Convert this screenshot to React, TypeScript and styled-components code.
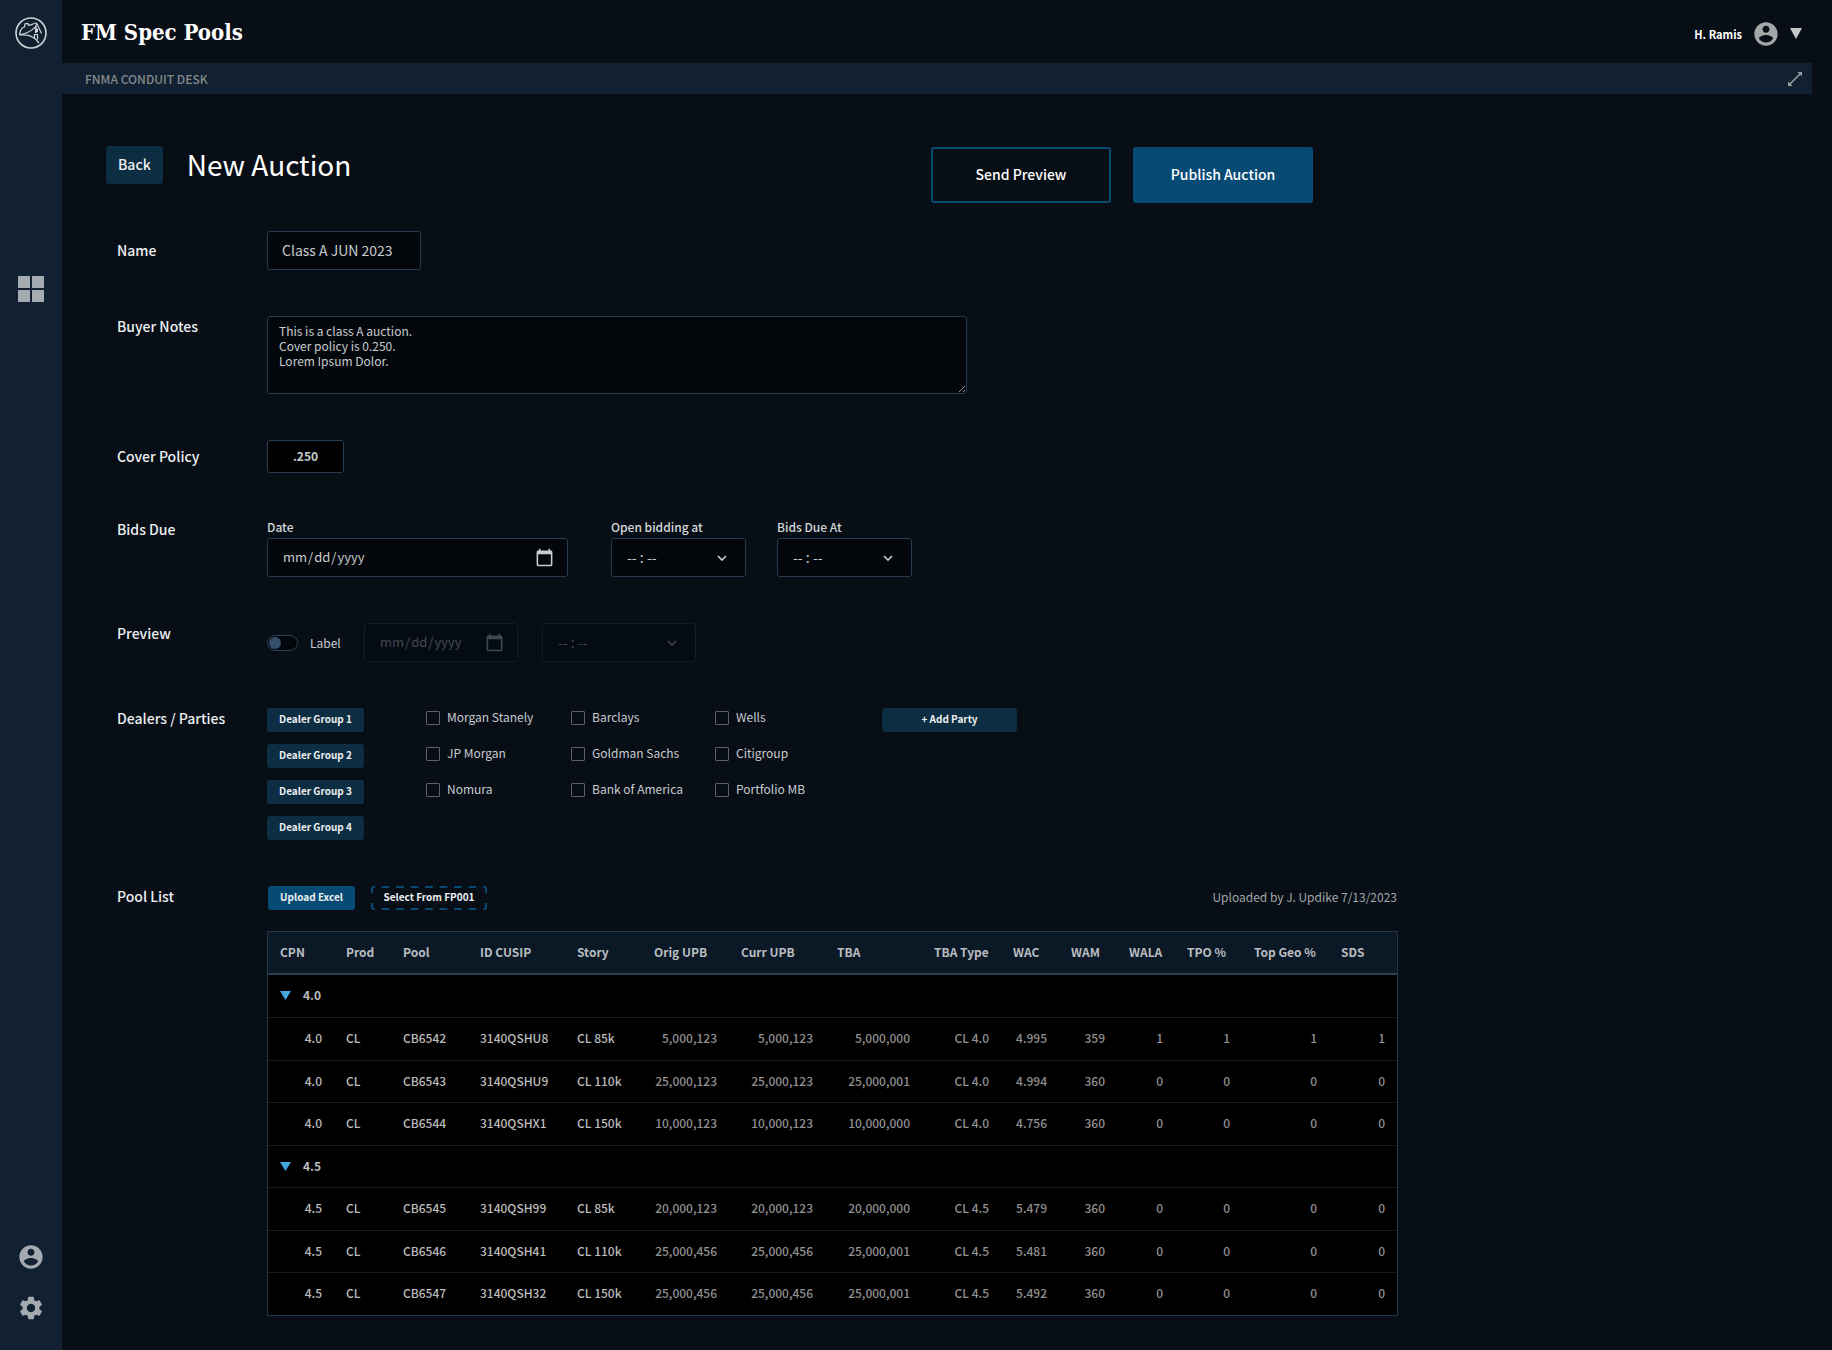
import React, { useState } from "react";
import styled, { createGlobalStyle } from "styled-components";

const color = {
  page: "#070e16",
  rail: "#122131",
  field: "#03070b",
  line: "#283c51",
  petrol: "#0c2d42",
  blue: "#074b75",
  text: "#eceff1",
  soft: "#c8ccce",
  muted: "#a3a6a8",
  icon: "#a3abb1",
};

const GlobalStyle = createGlobalStyle`
  *, *::before, *::after { box-sizing: border-box; }
  body {
    margin: 0;
    background: ${color.page};
    color: ${color.text};
    color-scheme: dark;
    font-family: "Noto Sans CJK SC", "Noto Sans", sans-serif;
    font-size: 14px;
    line-height: 20px;
  }
  button, input, select, textarea { font: inherit; color: inherit; margin: 0; }
  button { cursor: pointer; }
`;

const Shell = styled.div`
  display: flex;
  min-height: 100vh;
`;

const Rail = styled.nav`
  flex: none;
  width: 62px;
  display: flex;
  flex-direction: column;
  align-items: center;
  padding: 17px 0 29px;
  background: ${color.rail};
`;

const RailLink = styled.a`
  display: flex;
  color: ${color.icon};
`;

const RailMain = styled.div`
  margin-top: 227px;
`;

const RailFoot = styled.div`
  margin-top: auto;
  display: flex;
  flex-direction: column;
  gap: 23px;
`;

const Page = styled.div`
  flex: 1;
  min-width: 0;
`;

const TopBar = styled.header`
  height: 63px;
  display: flex;
  align-items: center;
  justify-content: space-between;
  padding: 0 30px 0 19px;
`;

const Brand = styled.div`
  font-family: "Roboto Slab", "DejaVu Serif Condensed", "DejaVu Serif", serif;
  font-size: 22px;
  line-height: 30px;
  font-weight: 700;
  color: #fff;
`;

const UserMenu = styled.button`
  display: flex;
  align-items: center;
  gap: 10px;
  padding: 4px 0 0;
  border: 0;
  background: none;
  font-size: 11px;
  font-weight: 700;
  color: #fff;
`;

const UserIcons = styled.span`
  display: flex;
  align-items: center;
  gap: 10px;
  color: #a4a6a8;
`;

const DeskBar = styled.div`
  display: flex;
  align-items: center;
  justify-content: space-between;
  height: 31px;
  margin-right: 20px;
  padding: 0 9px 0 23px;
  background: ${color.rail};
  color: #85898c;
  font-size: 12px;
  font-weight: 500;
`;

const IconButton = styled.button`
  display: flex;
  padding: 0;
  border: 0;
  background: none;
  color: #9a9ea1;
`;

const Content = styled.main`
  padding: 52px 44px 35px;
  max-width: 1424px;
`;

const TitleRow = styled.div`
  display: flex;
  align-items: flex-start;
  justify-content: space-between;
  max-width: 1207px;
  margin-bottom: 28px;
`;

const TitleGroup = styled.div`
  display: flex;
  align-items: center;
  gap: 24px;
`;

const Title = styled.h1`
  margin: 0;
  padding-bottom: 2px;
  font-size: 28px;
  line-height: 36px;
  font-weight: 400;
  color: #fff;
`;

const Actions = styled.div`
  display: flex;
  gap: 22px;
  padding-top: 1px;
`;

const BackButton = styled.button`
  height: 38px;
  padding: 0 12px 2px;
  border: 0;
  border-radius: 3px;
  background: ${color.petrol};
  font-weight: 500;
`;

const ActionButton = styled.button<{ $filled?: boolean }>`
  width: 180px;
  height: 56px;
  padding: 0 0 2px;
  border: 2px solid ${color.blue};
  border-radius: 3px;
  background: ${(p) => (p.$filled ? color.blue : "transparent")};
  font-weight: 500;
  color: #fff;
`;

const Form = styled.div`
  display: flex;
  flex-direction: column;
  gap: 46px;
  padding-left: 11px;
`;

const FormRow = styled.div<{ $center?: boolean }>`
  display: grid;
  grid-template-columns: 150px minmax(0, 1fr);
  align-items: ${(p) => (p.$center ? "center" : "start")};
`;

const RowLabel = styled.label`
  padding-bottom: 2px;
  font-weight: 500;
`;

const NameInput = styled.input`
  width: 154px;
  height: 39px;
  padding: 0 14px 2px;
  border: 1px solid ${color.line};
  border-radius: 3px;
  background: ${color.field};
  color: ${color.soft};
`;

const Notes = styled.textarea`
  display: block;
  width: 100%;
  max-width: 700px;
  height: 78px;
  padding: 6px 11px;
  border: 1px solid ${color.line};
  border-radius: 3px;
  background: ${color.field};
  color: ${color.soft};
  font-size: 12px;
  line-height: 15px;
`;

const CoverInput = styled.input`
  width: 77px;
  height: 33px;
  padding: 0 0 2px;
  border: 1px solid ${color.line};
  border-radius: 3px;
  background: #000;
  color: ${color.soft};
  font-size: 12px;
  font-weight: 700;
  text-align: center;
`;

const Inline = styled.div`
  display: flex;
  align-items: flex-end;
`;

const Field = styled.div<{ $after?: number }>`
  display: flex;
  flex-direction: column;
  margin-right: ${(p) => p.$after ?? 0}px;
`;

const FieldLabel = styled.label`
  height: 19px;
  line-height: 15px;
  font-size: 12px;
  font-weight: 500;
  color: #d5d8da;
`;

const ControlBox = styled.div<{ $width: number; $inset: number; $disabled?: boolean }>`
  display: grid;
  align-items: center;
  width: ${(p) => p.$width}px;
  opacity: ${(p) => (p.$disabled ? 0.3 : 1)};
  color: ${color.soft};
  > * { grid-area: 1 / 1; }
  > svg { justify-self: end; margin-right: ${(p) => p.$inset}px; pointer-events: none; }
`;

const DateInput = styled.input`
  width: 100%;
  height: 39px;
  padding: 0 14px 2px;
  border: 1px solid ${color.line};
  border-radius: 3px;
  background: ${color.field};
  font-size: 13px;
  &::-webkit-calendar-picker-indicator { opacity: 0; }
  &:disabled { color: inherit; }
`;

const TimeSelect = styled.select`
  appearance: none;
  width: 100%;
  height: 39px;
  padding: 0 15px 2px;
  border: 1px solid ${color.line};
  border-radius: 3px;
  background: ${color.field};
  &:disabled { opacity: 1; color: inherit; }
`;

const PreviewRow = styled.div`
  display: flex;
  align-items: center;
  gap: 24px;
`;

const SwitchLabel = styled.label`
  display: flex;
  align-items: center;
  gap: 12px;
  width: 73px;
  font-size: 12px;
  line-height: 18px;
  color: ${color.soft};
`;

const Switch = styled.input`
  appearance: none;
  flex: none;
  display: flex;
  align-items: center;
  width: 31px;
  height: 16px;
  padding: 0 1px;
  border: 1px solid #2c4157;
  border-radius: 8px;
  background: ${color.field};
  &::before {
    content: "";
    width: 12px;
    height: 12px;
    border-radius: 6px;
    background: #35506c;
  }
  &:checked { justify-content: flex-end; }
  &:checked::before { background: #4aa3df; }
`;

const Parties = styled.div`
  display: flex;
  align-items: flex-start;
`;

const GroupList = styled.div`
  display: flex;
  flex-direction: column;
  gap: 12px;
  width: 97px;
  margin-right: 62px;
`;

const SmallButton = styled.button<{ $filled?: boolean; $width?: number }>`
  height: 24px;
  width: ${(p) => (p.$width ? `${p.$width}px` : "auto")};
  padding: 0 0 2px;
  border: 0;
  border-radius: 3px;
  background: ${(p) => (p.$filled ? color.blue : color.petrol)};
  font-size: 10px;
  line-height: 16px;
  font-weight: 700;
`;

const dashX = `linear-gradient(90deg, ${color.blue} 4px, transparent 4px 11px, ${color.blue} 11px)`;
const dashY = `linear-gradient(${color.blue} 7px, transparent 7px 17px, ${color.blue} 17px)`;

const DashedButton = styled(SmallButton)`
  background:
    ${dashX} top left / 15px 2px round no-repeat,
    ${dashX} bottom left / 15px 2px round no-repeat,
    ${dashY} top left / 2px 24px no-repeat,
    ${dashY} top right / 2px 24px no-repeat;
`;

const CheckGrid = styled.div`
  display: grid;
  grid-template-columns: 145px 144px 167px;
  row-gap: 17px;
`;

const CheckLabel = styled.label`
  display: flex;
  align-items: center;
  gap: 7px;
  font-size: 12px;
  line-height: 19px;
  color: ${color.soft};
`;

const CheckText = styled.span`
  padding-bottom: 1px;
  line-height: 18px;
`;

const Check = styled.input`
  appearance: none;
  flex: none;
  width: 14px;
  height: 14px;
  border: 1px solid #5d6164;
  border-radius: 1px;
  background: transparent;
  &:checked { background: #4aa3df; }
`;

const PoolArea = styled.div`
  display: flex;
  flex-direction: column;
  gap: 21px;
  width: 1131px;
`;

const PoolTools = styled.div`
  display: flex;
  align-items: center;
  gap: 16px;
  padding-left: 1px;
`;

const Uploaded = styled.span`
  margin-left: auto;
  padding: 0 1px 2px 0;
  font-size: 12px;
  color: ${color.muted};
`;

const Table = styled.table`
  width: 100%;
  table-layout: fixed;
  border-collapse: separate;
  border-spacing: 0;
  border: 1px solid #22364c;
  background: #000;
  font-size: 12px;
  font-weight: 500;
  color: ${color.soft};
`;

const Head = styled.th`
  height: 43px;
  padding: 0 12px 2px;
  border-bottom: 2px solid #2b3c53;
  background: #0b1825;
  text-align: left;
  font-weight: 700;
  white-space: nowrap;
  color: #b9bdc0;
`;

const Row = styled.tr`
  height: 42px;
  &:nth-child(even) { height: 43px; }
`;

const Cell = styled.td<{ $right?: boolean; $dim?: boolean }>`
  padding: 0 12px 2px;
  border-top: 1px solid #191919;
  text-align: ${(p) => (p.$right ? "right" : "left")};
  white-space: nowrap;
  color: ${(p) => (p.$dim ? "#929292" : "#bcbcbc")};
`;

const GroupCell = styled.td<{ $first?: boolean }>`
  padding: 0 12px 2px;
  border-top: ${(p) => (p.$first ? "0" : "1px solid #191919")};
`;

const GroupToggle = styled.button`
  display: flex;
  align-items: center;
  gap: 12px;
  padding: 0;
  border: 0;
  background: none;
  font-weight: 700;
  color: #b9bdc0;
`;

const LogoIcon = () => (
  <svg width="32" height="32" viewBox="0 0 32 32" fill="none" stroke="#d0d5d8">
    <circle cx="16" cy="16" r="15" strokeWidth="1.6" />
    <path
      d="M4.500 17.500C5 14.500 6 11.800 8 10.500l1.500-.5.5-3.200 3-.5.5 2.200C16 8 19 6.200 21.500 6c.8 3-4 7-9 9.500-3 1.400-5.500 2-8 2zM4.500 18c7-.8 12 .5 16 4l3.500 4M21.500 6l5 10.500M21 9l-.5 7M19 17.500h3.500v5M19.500 17.500v3"
      strokeWidth="1.200"
      strokeLinejoin="round"
    />
    <path d="M20 11.500h3v3.500l-3 1z" fill="#d0d5d8" stroke="none" />
  </svg>
);

const GridIcon = () => (
  <svg width="26" height="26" viewBox="0 0 26 26" fill="currentColor">
    <path d="M0 0h12v12H0zM14 0h12v12H14zM0 14h12v12H0zM14 14h12v12H14z" />
  </svg>
);

const AccountIcon = () => (
  <svg width="28" height="28" viewBox="0 0 24 24" fill="currentColor">
    <path d="M12 2C6.480 2 2 6.480 2 12s4.480 10 10 10 10-4.480 10-10S17.520 2 12 2zm0 3c1.660 0 3 1.340 3 3s-1.340 3-3 3-3-1.340-3-3 1.340-3 3-3zm0 14.200c-2.500 0-4.710-1.280-6-3.220.03-1.990 4-3.080 6-3.080 1.990 0 5.970 1.090 6 3.080-1.290 1.940-3.500 3.220-6 3.220z" />
  </svg>
);

const GearIcon = () => (
  <svg width="28" height="28" viewBox="0 0 24 24" fill="currentColor">
    <path d="M19.140 12.940c.04-.3.06-.61.06-.94 0-.32-.02-.64-.07-.94l2.030-1.580c.18-.14.23-.41.12-.61l-1.920-3.320c-.12-.22-.37-.29-.59-.22l-2.390.96c-.5-.38-1.030-.7-1.620-.94l-.36-2.540c-.04-.24-.24-.41-.48-.41h-3.840c-.24 0-.43.17-.47.41l-.36 2.540c-.59.24-1.130.57-1.620.94l-2.390-.96c-.22-.08-.47 0-.59.22L2.740 8.870c-.12.21-.08.47.12.61l2.030 1.580c-.05.3-.09.63-.09.94s.02.64.07.94l-2.030 1.580c-.18.14-.23.41-.12.61l1.920 3.320c.12.22.37.29.59.22l2.390-.96c.5.38 1.030.7 1.620.94l.36 2.540c.05.24.24.41.48.41h3.840c.24 0 .44-.17.47-.41l.36-2.540c.59-.24 1.130-.56 1.620-.94l2.390.96c.22.08.47 0 .59-.22l1.920-3.320c.12-.22.07-.47-.12-.61l-2.010-1.580zM12 15.600c-1.980 0-3.600-1.620-3.600-3.600s1.620-3.600 3.600-3.600 3.600 1.620 3.600 3.600-1.620 3.600-3.600 3.600z" />
  </svg>
);

const CaretIcon = () => (
  <svg width="12" height="11" viewBox="0 0 12 11" fill="#c6c8ca">
    <path d="M0 0h12L6 11z" />
  </svg>
);

const GroupCaret = ({ open }: { open: boolean }) => (
  <svg width="11" height="10" viewBox="0 0 11 10" fill="#45a5e0">
    <path d={open ? "M0 1h11L5.500 10z" : "M1 0v10l9-5z"} />
  </svg>
);

const ExpandIcon = () => (
  <svg width="16" height="16" viewBox="0 0 16 16" fill="currentColor">
    <path d="M10.500 1H15v4.500L13.300 3.800 3.800 13.300 5.500 15H1v-4.500l1.700 1.700 9.500-9.500z" />
  </svg>
);

const CalendarIcon = () => (
  <svg width="19" height="19" viewBox="0 0 24 24" fill="currentColor">
    <path d="M20 3h-1V1h-2v2H7V1H5v2H4c-1.100 0-2 .9-2 2v16c0 1.100.9 2 2 2h16c1.100 0 2-.9 2-2V5c0-1.100-.9-2-2-2zm0 18H4V8h16v13z" />
  </svg>
);

const Chevron = () => (
  <svg width="10" height="6" viewBox="0 0 10 6" fill="none" stroke="currentColor" strokeWidth="1.700">
    <path d="m1 1 4 4 4-4" />
  </svg>
);

const times = ["08:00", "09:00", "10:00", "11:00", "12:00", "13:00", "14:00", "15:00", "16:00"];

type PickerProps = { id: string; width: number; disabled?: boolean; label?: string };

const TimePicker = ({ id, width, disabled, label }: PickerProps) => (
  <ControlBox $width={width} $inset={19} $disabled={disabled}>
    <TimeSelect id={id} disabled={disabled} aria-label={label}>
      <option value="">-- : --</option>
      {times.map((t) => (
        <option key={t}>{t}</option>
      ))}
    </TimeSelect>
    <Chevron />
  </ControlBox>
);

const DatePicker = ({ id, width, disabled, label }: PickerProps) => (
  <ControlBox $width={width} $inset={14} $disabled={disabled}>
    <DateInput id={id} type="date" disabled={disabled} aria-label={label} />
    <CalendarIcon />
  </ControlBox>
);

const dealerGroups = ["Dealer Group 1", "Dealer Group 2", "Dealer Group 3", "Dealer Group 4"];

const dealers = [
  "Morgan Stanely", "Barclays", "Wells",
  "JP Morgan", "Goldman Sachs", "Citigroup",
  "Nomura", "Bank of America", "Portfolio MB",
];

const columns: [string, number][] = [
  ["CPN", 66], ["Prod", 57], ["Pool", 77], ["ID CUSIP", 97], ["Story", 77],
  ["Orig UPB", 87], ["Curr UPB", 96], ["TBA", 97], ["TBA Type", 79], ["WAC", 58],
  ["WAM", 58], ["WALA", 58], ["TPO %", 67], ["Top Geo %", 87], ["SDS", 68],
];

const pools = [
  {
    coupon: "4.0",
    rows: [
      ["4.0", "CL", "CB6542", "3140QSHU8", "CL 85k", "5,000,123", "5,000,123", "5,000,000", "CL 4.0", "4.995", "359", "1", "1", "1", "1"],
      ["4.0", "CL", "CB6543", "3140QSHU9", "CL 110k", "25,000,123", "25,000,123", "25,000,001", "CL 4.0", "4.994", "360", "0", "0", "0", "0"],
      ["4.0", "CL", "CB6544", "3140QSHX1", "CL 150k", "10,000,123", "10,000,123", "10,000,000", "CL 4.0", "4.756", "360", "0", "0", "0", "0"],
    ],
  },
  {
    coupon: "4.5",
    rows: [
      ["4.5", "CL", "CB6545", "3140QSH99", "CL 85k", "20,000,123", "20,000,123", "20,000,000", "CL 4.5", "5.479", "360", "0", "0", "0", "0"],
      ["4.5", "CL", "CB6546", "3140QSH41", "CL 110k", "25,000,456", "25,000,456", "25,000,001", "CL 4.5", "5.481", "360", "0", "0", "0", "0"],
      ["4.5", "CL", "CB6547", "3140QSH32", "CL 150k", "25,000,456", "25,000,456", "25,000,001", "CL 4.5", "5.492", "360", "0", "0", "0", "0"],
    ],
  },
];

const PoolTable = () => {
  const [closed, setClosed] = useState<string[]>([]);
  const toggle = (c: string) =>
    setClosed((list) => (list.includes(c) ? list.filter((x) => x !== c) : [...list, c]));
  return (
    <Table>
      <colgroup>
        {columns.map(([name, width]) => (
          <col key={name} width={width} />
        ))}
      </colgroup>
      <thead>
        <tr>
          {columns.map(([name]) => (
            <Head key={name} scope="col">{name}</Head>
          ))}
        </tr>
      </thead>
      {pools.map((group, g) => {
        const open = !closed.includes(group.coupon);
        return (
          <tbody key={group.coupon}>
            <Row>
              <GroupCell colSpan={columns.length} $first={g === 0}>
                <GroupToggle type="button" aria-expanded={open} onClick={() => toggle(group.coupon)}>
                  <GroupCaret open={open} />
                  {group.coupon}
                </GroupToggle>
              </GroupCell>
            </Row>
            {open &&
              group.rows.map((row) => (
                <Row key={row[2]}>
                  {row.map((value, i) => (
                    <Cell key={columns[i][0]} $right={i === 0 || i > 4} $dim={i > 4}>{value}</Cell>
                  ))}
                </Row>
              ))}
          </tbody>
        );
      })}
    </Table>
  );
};

export default function App() {
  const [preview, setPreview] = useState(false);
  return (
    <>
      <GlobalStyle />
      <Shell>
        <Rail aria-label="Main">
          <RailLink href="#home" aria-label="Home"><LogoIcon /></RailLink>
          <RailMain>
            <RailLink href="#dashboard" aria-label="Dashboard"><GridIcon /></RailLink>
          </RailMain>
          <RailFoot>
            <RailLink href="#account" aria-label="Account"><AccountIcon /></RailLink>
            <RailLink href="#settings" aria-label="Settings"><GearIcon /></RailLink>
          </RailFoot>
        </Rail>
        <Page>
          <TopBar>
            <Brand>FM Spec Pools</Brand>
            <UserMenu type="button">
              H. Ramis
              <UserIcons><AccountIcon /><CaretIcon /></UserIcons>
            </UserMenu>
          </TopBar>
          <DeskBar>
            FNMA CONDUIT DESK
            <IconButton type="button" aria-label="Expand"><ExpandIcon /></IconButton>
          </DeskBar>
          <Content>
            <TitleRow>
              <TitleGroup>
                <BackButton type="button">Back</BackButton>
                <Title>New Auction</Title>
              </TitleGroup>
              <Actions>
                <ActionButton type="button">Send Preview</ActionButton>
                <ActionButton type="button" $filled>Publish Auction</ActionButton>
              </Actions>
            </TitleRow>
            <Form>
              <FormRow $center>
                <RowLabel htmlFor="name">Name</RowLabel>
                <NameInput id="name" defaultValue="Class A JUN 2023" />
              </FormRow>
              <FormRow>
                <RowLabel htmlFor="notes">Buyer Notes</RowLabel>
                <Notes id="notes" defaultValue={"This is a class A auction.\nCover policy is 0.250.\nLorem Ipsum Dolor."} />
              </FormRow>
              <FormRow $center>
                <RowLabel htmlFor="cover">Cover Policy</RowLabel>
                <CoverInput id="cover" defaultValue=".250" />
              </FormRow>
              <FormRow>
                <RowLabel as="div">Bids Due</RowLabel>
                <Inline>
                  <Field $after={43}>
                    <FieldLabel htmlFor="due-date">Date</FieldLabel>
                    <DatePicker id="due-date" width={301} />
                  </Field>
                  <Field $after={31}>
                    <FieldLabel htmlFor="open-at">Open bidding at</FieldLabel>
                    <TimePicker id="open-at" width={135} />
                  </Field>
                  <Field>
                    <FieldLabel htmlFor="due-at">Bids Due At</FieldLabel>
                    <TimePicker id="due-at" width={135} />
                  </Field>
                </Inline>
              </FormRow>
              <FormRow>
                <RowLabel as="div">Preview</RowLabel>
                <PreviewRow>
                  <SwitchLabel>
                    <Switch type="checkbox" role="switch" checked={preview} onChange={(e) => setPreview(e.target.checked)} />
                    Label
                  </SwitchLabel>
                  <DatePicker id="preview-date" label="Preview date" width={154} disabled={!preview} />
                  <TimePicker id="preview-at" label="Preview time" width={154} disabled={!preview} />
                </PreviewRow>
              </FormRow>
              <FormRow>
                <RowLabel as="div">Dealers / Parties</RowLabel>
                <Parties>
                  <GroupList>
                    {dealerGroups.map((name) => (
                      <SmallButton key={name} type="button">{name}</SmallButton>
                    ))}
                  </GroupList>
                  <CheckGrid>
                    {dealers.map((name) => (
                      <CheckLabel key={name}>
                        <Check type="checkbox" />
                        <CheckText>{name}</CheckText>
                      </CheckLabel>
                    ))}
                  </CheckGrid>
                  <SmallButton type="button" $width={135}>+ Add Party</SmallButton>
                </Parties>
              </FormRow>
              <FormRow>
                <RowLabel as="div">Pool List</RowLabel>
                <PoolArea>
                  <PoolTools>
                    <SmallButton type="button" $filled $width={87}>Upload Excel</SmallButton>
                    <DashedButton type="button" $width={116}>Select From FP001</DashedButton>
                    <Uploaded>Uploaded by J. Updike 7/13/2023</Uploaded>
                  </PoolTools>
                  <PoolTable />
                </PoolArea>
              </FormRow>
            </Form>
          </Content>
        </Page>
      </Shell>
    </>
  );
}
